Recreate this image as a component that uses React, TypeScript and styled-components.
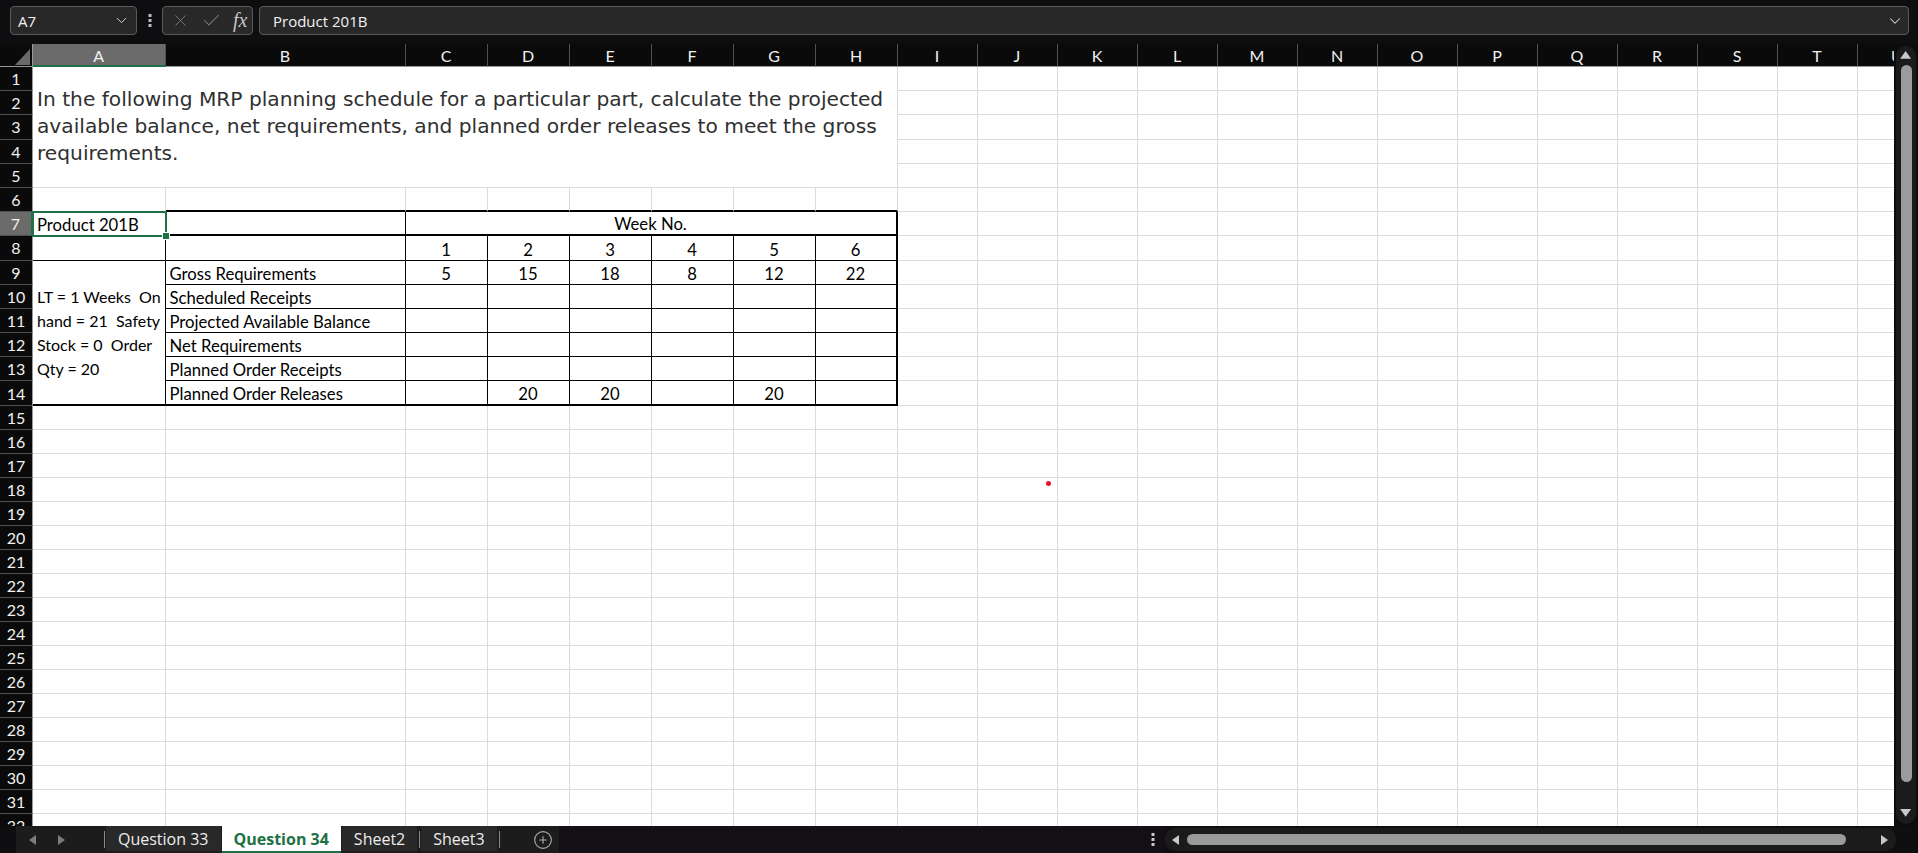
import React from "react";
import styled, { createGlobalStyle } from "styled-components";
import { ChevronDown, X, Check, CirclePlus } from "lucide-react";

const GREEN = "#1e7145";
const GRID = "1px solid #dcdcdc";
const THIN = "1px solid #000";
const THICK = "2px solid #000";
const CHROME = "#0e0d0f";

const GlobalStyle = createGlobalStyle`
  html, body { margin: 0; padding: 0; background: ${CHROME}; overflow: hidden; }
  *, *::before, *::after { box-sizing: border-box; }
`;

const Shell = styled.div`
  position: relative;
  width: 1918px;
  height: 853px;
  display: flex;
  flex-direction: column;
  background: ${CHROME};
  font-family: "Open Sans", "Noto Sans", sans-serif;
`;

/* ---------- formula bar ---------- */

const FormulaBar = styled.div`
  flex: none;
  height: 44px;
  display: flex;
  align-items: flex-start;
  padding: 6px 9px 0 10px;
`;

const Field = styled.div`
  height: 29px;
  border: 1px solid #5a5a5a;
  border-radius: 4px;
  background: #282828;
  display: flex;
  align-items: center;
  color: #f2f2f2;
  font-size: 15px;
`;

const NameBox = styled(Field)`
  width: 127px;
  justify-content: space-between;
  padding: 0 6px 0 7px;
`;

const Kebab = styled.div`
  width: 25px;
  height: 29px;
  display: flex;
  align-items: center;
  justify-content: center;
`;

const FxGroup = styled(Field)`
  width: 91px;
  padding: 0 0 0 8px;
  gap: 11px;
  color: #7a7a7a;
`;

const FxLabel = styled.span`
  font-family: "Liberation Serif", "DejaVu Serif", serif;
  font-style: italic;
  font-size: 20px;
  color: #c4c4c4;
`;

const FormulaInput = styled(Field)`
  flex: 1;
  margin-left: 6px;
  padding: 0 4px 0 13px;
  justify-content: space-between;
`;

/* ---------- sheet ---------- */

const Workspace = styled.div`
  flex: none;
  height: 782px;
  display: flex;
`;

const Viewport = styled.div`
  flex: 1;
  overflow: hidden;
  background: #fff;
`;

const SheetGrid = styled.div`
  display: grid;
  width: max-content;
  grid-template-columns: 33px 132.5px 240px repeat(6, 82px) repeat(13, 80px);
  grid-template-rows: 23px repeat(14, 24.2px) repeat(18, 24px);
  font-family: Lato, "Liberation Sans", sans-serif;
`;

const Corner = styled.div`
  grid-row: 1;
  grid-column: 1;
  background: #0a0a0a;
  border-right: 1px solid #9a9a9a;
  border-bottom: 1px solid #9a9a9a;
`;

const ColHead = styled.div<{ $col: number; $active?: boolean }>`
  grid-row: 1;
  grid-column: ${(p) => p.$col};
  background: ${(p) => (p.$active ? "#6b6b6b" : "#0a0a0a")};
  border-right: 1px solid #505050;
  border-bottom: ${(p) => (p.$active ? `2px solid ${GREEN}` : "1px solid #9a9a9a")};
  color: #f0f0f0;
  font-size: 16px;
  display: flex;
  align-items: center;
  justify-content: center;
  padding-top: ${(p) => (p.$active ? "2px" : "0")};
`;

const RowHead = styled.div<{ $row: number; $active?: boolean }>`
  grid-row: ${(p) => p.$row};
  grid-column: 1;
  background: ${(p) => (p.$active ? "#6b6b6b" : "#0a0a0a")};
  border-right: ${(p) => (p.$active ? `2px solid ${GREEN}` : "1px solid #9a9a9a")};
  border-bottom: 1px solid #505050;
  color: #f0f0f0;
  font-size: 16px;
  display: flex;
  align-items: center;
  justify-content: center;
`;

const Cell = styled.div<{
  $row: number;
  $col: number;
  $rowSpan?: number;
  $colSpan?: number;
  $right: string;
  $bottom: string;
  $align?: "flex-start" | "center";
}>`
  grid-row: ${(p) => p.$row} / span ${(p) => p.$rowSpan ?? 1};
  grid-column: ${(p) => p.$col} / span ${(p) => p.$colSpan ?? 1};
  border-right: ${(p) => p.$right};
  border-bottom: ${(p) => p.$bottom};
  background: #fff;
  display: flex;
  align-items: flex-end;
  justify-content: ${(p) => p.$align ?? "flex-start"};
  padding: 0 4px;
  font-size: 16.7px;
  line-height: 20px;
  color: #000;
  white-space: nowrap;
`;

const ProblemCell = styled(Cell)`
  flex-direction: column;
  align-items: flex-start;
  justify-content: center;
  padding: 0 0 1px 4px;
  font-family: "DejaVu Sans", Verdana, sans-serif;
  font-size: 20.2px;
  line-height: 27px;
  color: #303030;
`;

const NoteCell = styled(Cell)`
  flex-direction: column;
  align-items: flex-start;
  justify-content: center;
  padding: 2px 0 0 4px;
  font-size: 16px;
  line-height: 24.2px;
  white-space: pre;
`;

const SelectedCell = styled(Cell)`
  position: relative;
`;

const Selection = styled.div`
  position: absolute;
  top: -1px;
  right: -2px;
  bottom: -2px;
  left: -1px;
  border: 2px solid ${GREEN};
  z-index: 3;
  pointer-events: none;
`;

const FillHandle = styled.div`
  position: absolute;
  right: -5px;
  bottom: -5px;
  width: 8px;
  height: 8px;
  background: ${GREEN};
  border: 1px solid #fff;
`;

/* ---------- vertical scrollbar ---------- */

const VScroll = styled.div`
  flex: none;
  width: 24px;
  background: #0c0c0c;
  padding: 2px;
`;

const VTrack = styled.div`
  height: 100%;
  border-radius: 10px;
  background: #1b1b1b;
  display: flex;
  flex-direction: column;
  align-items: center;
  padding: 4px 0 6px;
`;

const VThumb = styled.div`
  width: 11px;
  height: 717px;
  margin-top: 5px;
  border-radius: 6px;
  background: #9b9b9b;
`;

const Spacer = styled.div`
  flex: 1;
`;

/* ---------- sheet tabs ---------- */

const TabBar = styled.div`
  flex: 1;
  display: flex;
  align-items: stretch;
`;

const TabStrip = styled.div`
  margin-left: 16px;
  width: 543px;
  background: #1c1c1c;
  display: flex;
  align-items: center;
`;

const SheetNav = styled.div`
  width: 87px;
  display: flex;
  align-items: center;
  gap: 22px;
  padding-left: 12px;
`;

const TabDivider = styled.div`
  width: 1px;
  height: 17px;
  background: #8a8a8a;
  margin: 0 1px;
`;

const SheetTab = styled.div<{ $active?: boolean }>`
  height: 100%;
  display: flex;
  align-items: center;
  padding: 0 12px;
  margin-right: 1px;
  font-size: 16px;
  background: ${(p) => (p.$active ? "#fff" : "#292929")};
  color: ${(p) => (p.$active ? GREEN : "#ededed")};
  font-weight: ${(p) => (p.$active ? 700 : 400)};
  border-bottom: 2px solid ${(p) => (p.$active ? GREEN : "#1c1c1c")};
`;

const AddSheet = styled.div`
  flex: 1;
  display: flex;
  align-items: center;
  justify-content: flex-end;
  padding-right: 6px;
  color: #a8a8a8;
`;

const TabFill = styled.div`
  flex: 1;
  background: #130f14;
  display: flex;
  align-items: center;
  justify-content: flex-end;
  padding-right: 10px;
`;

const HScroll = styled.div`
  flex: none;
  width: 731px;
  height: 23px;
  margin: 2px 22px 0 0;
  border-radius: 11px;
  background: #1b1b1b;
  display: flex;
  align-items: center;
  padding: 0 7px 0 6px;
`;

const HThumb = styled.div`
  width: 659px;
  height: 11px;
  margin-left: 8px;
  border-radius: 6px;
  background: #9b9b9b;
`;

const Cursor = styled.div`
  position: absolute;
  left: 1046px;
  top: 481px;
  width: 5px;
  height: 5px;
  border-radius: 50%;
  background: #e8112d;
`;

/* ---------- data ---------- */

const COLS = "ABCDEFGHIJKLMNOPQRSTU".split("");
const ROWS = Array.from({ length: 32 }, (_, i) => i + 1);

const values: Record<string, { text: string; center?: boolean }> = {
  "9-1": { text: "Gross Requirements" },
  "10-1": { text: "Scheduled Receipts" },
  "11-1": { text: "Projected Available Balance" },
  "12-1": { text: "Net Requirements" },
  "13-1": { text: "Planned Order Receipts" },
  "14-1": { text: "Planned Order Releases" },
};
["1", "2", "3", "4", "5", "6"].forEach((v, i) => (values[`8-${i + 2}`] = { text: v, center: true }));
["5", "15", "18", "8", "12", "22"].forEach((v, i) => (values[`9-${i + 2}`] = { text: v, center: true }));
values["14-3"] = { text: "20", center: true };
values["14-4"] = { text: "20", center: true };
values["14-6"] = { text: "20", center: true };

function edgesFor(r: number, c: number) {
  let right = GRID;
  let bottom = GRID;
  if (r === 6 && c >= 1 && c <= 7) bottom = THICK;
  if (r === 7 && c === 0) {
    right = THIN;
    bottom = THIN;
  }
  if (r === 7 && c === 1) {
    right = THIN;
    bottom = THICK;
  }
  if (r >= 8 && r <= 14 && c <= 7) {
    right = c === 7 ? THICK : THIN;
    bottom = r === 14 ? THICK : THIN;
  }
  return { right, bottom };
}

const Dots = ({ color = "#bdbdbd" }: { color?: string }) => (
  <svg width="4" height="13" viewBox="0 0 4 13">
    <rect x="0.5" y="0" width="3" height="3" fill={color} />
    <rect x="0.5" y="5" width="3" height="3" fill={color} />
    <rect x="0.5" y="10" width="3" height="3" fill={color} />
  </svg>
);

const Tri = ({ dir, size = 8, color }: { dir: "l" | "r" | "u" | "d"; size?: number; color: string }) => {
  const pts = {
    l: "8,0 8,10 1,5",
    r: "0,0 0,10 7,5",
    u: "0,8 10,8 5,1",
    d: "0,1 10,1 5,8",
  }[dir];
  const flat = dir === "l" || dir === "r";
  return (
    <svg
      width={flat ? size * 0.8 : size * 1.25}
      height={flat ? size : size * 1.1}
      viewBox={flat ? "0 0 8 10" : "0 0 10 9"}
    >
      <polygon points={pts} fill={color} />
    </svg>
  );
};

const App: React.FC = () => {
  const cells: React.ReactNode[] = [];

  cells.push(
    <Corner key="corner">
      <svg width="32" height="22" viewBox="0 0 32 22">
        <polygon points="15,21 30,21 30,5" fill="#6a6a6a" />
      </svg>
    </Corner>
  );

  COLS.forEach((letter, i) =>
    cells.push(
      <ColHead key={`col-${letter}`} $col={i + 2} $active={letter === "A"}>
        {letter}
      </ColHead>
    )
  );

  ROWS.forEach((r) => {
    cells.push(
      <RowHead key={`row-${r}`} $row={r + 1} $active={r === 7}>
        {r}
      </RowHead>
    );

    COLS.forEach((_, c) => {
      const key = `${r}-${c}`;
      const row = r + 1;
      const col = c + 2;

      if (r <= 5 && c <= 7) {
        if (r === 1 && c === 0)
          cells.push(
            <ProblemCell key={key} $row={row} $col={col} $rowSpan={5} $colSpan={8} $right={GRID} $bottom={GRID}>
              <span>In the following MRP planning schedule for a particular part, calculate the projected</span>
              <span>available balance, net requirements, and planned order releases to meet the gross</span>
              <span>requirements.</span>
            </ProblemCell>
          );
        return;
      }

      if (r === 7 && c >= 2 && c <= 7) {
        if (c === 2)
          cells.push(
            <Cell key={key} $row={row} $col={col} $colSpan={6} $right={THICK} $bottom={THICK} $align="center">
              Week No.
            </Cell>
          );
        return;
      }

      if (r >= 9 && r <= 14 && c === 0) {
        if (r === 9)
          cells.push(
            <NoteCell key={key} $row={row} $col={col} $rowSpan={6} $right={THIN} $bottom={THICK}>
              <span>{"LT = 1 Weeks  On"}</span>
              <span>{"hand = 21  Safety"}</span>
              <span>{"Stock = 0  Order"}</span>
              <span>{"Qty = 20"}</span>
            </NoteCell>
          );
        return;
      }

      const { right, bottom } = edgesFor(r, c);

      if (r === 7 && c === 0) {
        cells.push(
          <SelectedCell key={key} $row={row} $col={col} $right={right} $bottom={bottom}>
            Product 201B
            <Selection>
              <FillHandle />
            </Selection>
          </SelectedCell>
        );
        return;
      }

      const v = values[key];
      cells.push(
        <Cell key={key} $row={row} $col={col} $right={right} $bottom={bottom} $align={v?.center ? "center" : "flex-start"}>
          {v?.text}
        </Cell>
      );
    });
  });

  return (
    <>
      <GlobalStyle />
      <Shell>
        <FormulaBar>
          <NameBox>
            <span>A7</span>
            <ChevronDown size={17} strokeWidth={1.4} color="#d8d8d8" />
          </NameBox>
          <Kebab>
            <Dots />
          </Kebab>
          <FxGroup>
            <X size={19} strokeWidth={1.2} />
            <Check size={21} strokeWidth={1.2} />
            <FxLabel>fx</FxLabel>
          </FxGroup>
          <FormulaInput>
            <span>Product 201B</span>
            <ChevronDown size={18} strokeWidth={1.4} color="#d8d8d8" />
          </FormulaInput>
        </FormulaBar>

        <Workspace>
          <Viewport>
            <SheetGrid>{cells}</SheetGrid>
          </Viewport>
          <VScroll>
            <VTrack>
              <Tri dir="u" size={9} color="#c8c8c8" />
              <VThumb />
              <Spacer />
              <Tri dir="d" size={9} color="#c8c8c8" />
            </VTrack>
          </VScroll>
        </Workspace>

        <TabBar>
          <TabStrip>
            <SheetNav>
              <Tri dir="l" size={10} color="#7d7d7d" />
              <Tri dir="r" size={10} color="#7d7d7d" />
            </SheetNav>
            <TabDivider />
            <SheetTab>Question 33</SheetTab>
            <SheetTab $active>Question 34</SheetTab>
            <SheetTab>Sheet2</SheetTab>
            <TabDivider />
            <SheetTab>Sheet3</SheetTab>
            <TabDivider />
            <AddSheet>
              <CirclePlus size={20} strokeWidth={1.4} />
            </AddSheet>
          </TabStrip>
          <TabFill>
            <Dots color="#c8c8c8" />
          </TabFill>
          <HScroll>
            <Tri dir="l" size={10} color="#c8c8c8" />
            <HThumb />
            <Spacer />
            <Tri dir="r" size={10} color="#c8c8c8" />
          </HScroll>
        </TabBar>

        <Cursor />
      </Shell>
    </>
  );
};

export default App;
